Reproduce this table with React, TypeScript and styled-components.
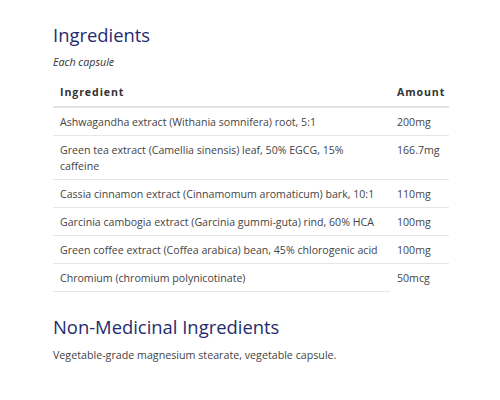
import React from "react";
import styled, { createGlobalStyle } from "styled-components";

const Global = createGlobalStyle`
  html, body { margin: 0; padding: 0; background: #ffffff; }
  body { font-family: "Open Sans", "Liberation Sans", sans-serif; }
`;

const Page = styled.div`
  width: 396px;
  padding: 22px 0 0 53px;
  color: #444444;
`;

const Heading = styled.h2`
  margin: 0;
  font-size: 18.4px;
  font-weight: 400;
  line-height: 26px;
  color: #1f2b6e;
`;

const Subtitle = styled.p`
  margin: 6px 0 9px;
  font-size: 10.7px;
  line-height: 17px;
  font-style: italic;
  color: #333333;
`;

const Table = styled.table`
  width: 100%;
  table-layout: fixed;
  border-collapse: collapse;
  font-size: 10.6px;
  line-height: 16px;
`;

const Th = styled.th<{ $amount?: boolean }>`
  box-sizing: border-box;
  text-align: left;
  font-weight: 700;
  letter-spacing: 0.9px;
  color: #333333;
  padding: 4px 7px 5px;
  line-height: 17px;
  border-bottom: 2px solid #e2e2e2;
  width: ${(p) => (p.$amount ? "59px" : "auto")};
  white-space: nowrap;
`;

const Td = styled.td<{ $noBorder?: boolean }>`
  vertical-align: top;
  padding: 6px 9px 5px 7px;
  color: #444444;
  border-bottom: ${(p) => (p.$noBorder ? "none" : "1px solid #e6e6e6")};
`;

const Section = styled.section`
  margin-top: 22px;
`;

const Body = styled.p`
  margin: 7px 0 0;
  font-size: 10.7px;
  line-height: 17px;
  color: #444444;
`;

const rows: [string, string][] = [
  ["Ashwagandha extract (Withania somnifera) root, 5:1", "200mg"],
  ["Green tea extract (Camellia sinensis) leaf, 50% EGCG, 15% caffeine", "166.7mg"],
  ["Cassia cinnamon extract (Cinnamomum aromaticum) bark, 10:1", "110mg"],
  ["Garcinia cambogia extract (Garcinia gummi-guta) rind, 60% HCA", "100mg"],
  ["Green coffee extract (Coffea arabica) bean, 45% chlorogenic acid", "100mg"],
  ["Chromium (chromium polynicotinate)", "50mcg"],
];

export default function App() {
  return (
    <>
      <Global />
      <Page>
        <Heading>Ingredients</Heading>
        <Subtitle>Each capsule</Subtitle>
        <Table>
          <thead>
            <tr>
              <Th>Ingredient</Th>
              <Th $amount>Amount</Th>
            </tr>
          </thead>
          <tbody>
            {rows.map(([name, amt], i) => (
              <tr key={i}>
                <Td>{name}</Td>
                <Td $noBorder={i === rows.length - 1}>{amt}</Td>
              </tr>
            ))}
          </tbody>
        </Table>
        <Section>
          <Heading>Non-Medicinal Ingredients</Heading>
          <Body>Vegetable-grade magnesium stearate, vegetable capsule.</Body>
        </Section>
      </Page>
    </>
  );
}
